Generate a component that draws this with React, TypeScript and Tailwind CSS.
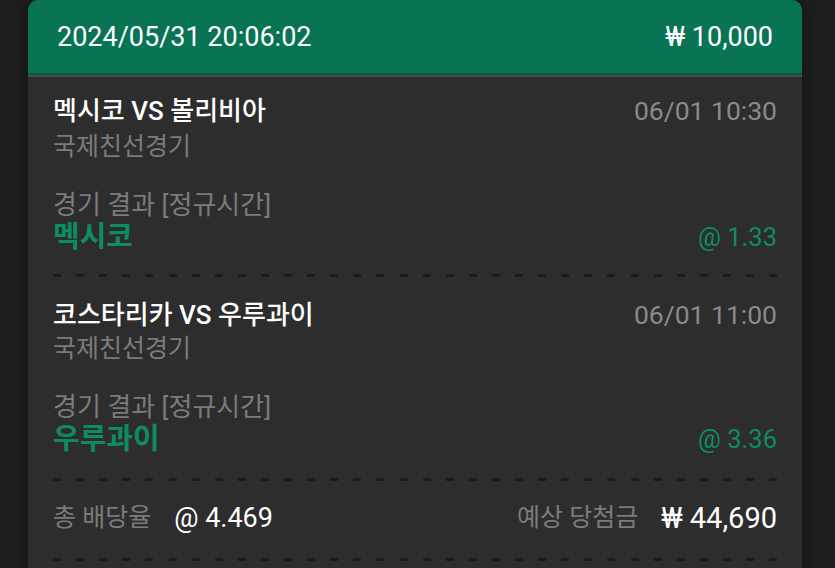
const dash =
  'h-[3px] bg-[repeating-linear-gradient(90deg,#1c1c1c_0_8px,transparent_8px_23.1px)]'

interface Bet {
  match: string
  league: string
  time: string
  market: string
  pick: string
  odds: string
}

const bets: Bet[] = [
  { match: '멕시코 VS 볼리비아', league: '국제친선경기', time: '06/01 10:30', market: '경기 결과 [정규시간]', pick: '멕시코', odds: '@ 1.33' },
  { match: '코스타리카 VS 우루과이', league: '국제친선경기', time: '06/01 11:00', market: '경기 결과 [정규시간]', pick: '우루과이', odds: '@ 3.36' },
]

function BetRow({ bet, first }: { bet: Bet; first: boolean }) {
  return (
    <div className={first ? 'pt-[17px]' : 'pt-[21px]'}>
      <div className="flex items-center justify-between leading-[34px]">
        <span className="text-[26px] font-medium text-white">{bet.match}</span>
        <span className="text-[26.5px] text-[#8a8a8a]">{bet.time}</span>
      </div>
      <div className={`text-[25px] leading-[34px] text-[#7b7b7b] ${first ? 'mt-[2px]' : ''}`}>{bet.league}</div>
      <div className="mt-[24px] flex items-end justify-between">
        <div>
          <div className="text-[26px] leading-[34px] text-[#7b7b7b]">{bet.market}</div>
          <div className="text-[29px] font-bold leading-[30px] text-[#0d8b63]">{bet.pick}</div>
        </div>
        <span className="text-[25.5px] leading-[30px] text-[#0d8b63]">{bet.odds}</span>
      </div>
      <div className={`${first ? 'mt-[22px]' : 'mt-[24px]'} ${dash}`} />
    </div>
  )
}

export default function App() {
  return (
    <div className="h-[568px] overflow-hidden bg-[#1e1e1e] font-['Roboto','Noto_Sans_CJK_KR',sans-serif]">
      <div className="ml-[28px] w-[774px] overflow-hidden rounded-t-[10px] bg-[#2d2d2d] shadow-[0_0_16px_rgba(0,0,0,0.45)]">
        <div className="flex h-[73px] items-center justify-between bg-[#087453] px-[29px] pt-[2px] text-[27px] text-white">
          <span>2024/05/31 20:06:02</span>
          <span>₩ 10,000</span>
        </div>
        <div className="h-[2px] bg-[#045a40]" />
        <div className="h-[2px] bg-[#4a4a4a]" />

        <div className="px-[25px]">
          {bets.map((b, i) => (
            <BetRow key={b.match} bet={b} first={i === 0} />
          ))}

          <div className="flex items-center justify-between pt-[20px] leading-[34px]">
            <div className="flex items-center gap-[23px]">
              <span className="text-[25px] text-[#7b7b7b]">총 배당율</span>
              <span className="text-[27px] text-white">@ 4.469</span>
            </div>
            <div className="flex items-center gap-[23px]">
              <span className="text-[25px] text-[#7b7b7b]">예상 당첨금</span>
              <span className="text-[29px] text-white">₩ 44,690</span>
            </div>
          </div>
          <div className={`mt-[23px] ${dash}`} />
          <div className="h-[20px]" />
        </div>
      </div>
    </div>
  )
}
